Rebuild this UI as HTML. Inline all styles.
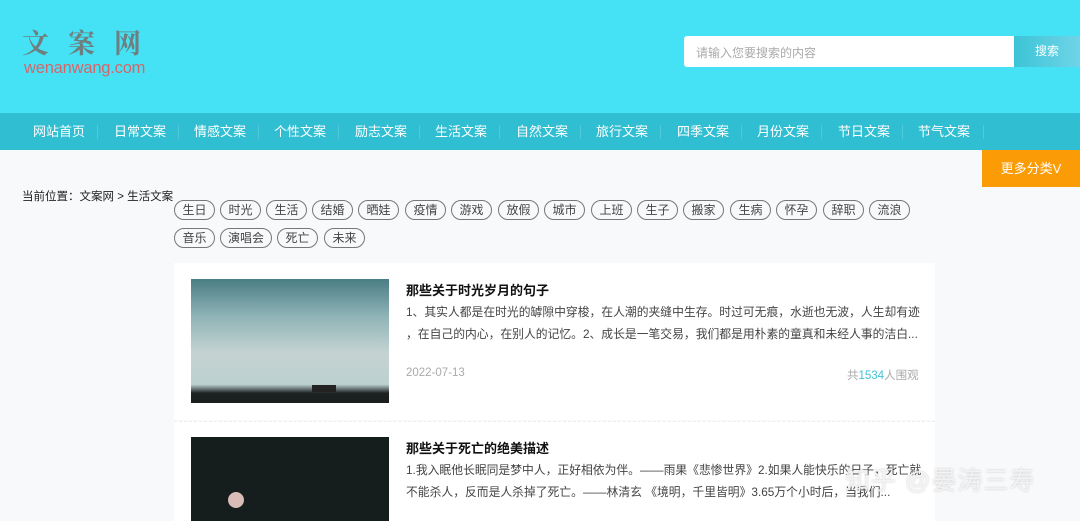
<!DOCTYPE html>
<html><head><meta charset="utf-8"><style>
*{margin:0;padding:0;box-sizing:border-box}
body{width:1080px;height:521px;overflow:hidden;background:#f8f9fb;font-family:"Liberation Sans","Noto Sans CJK SC",sans-serif;position:relative}
.hd{position:absolute;left:0;top:0;width:1080px;height:113px;background:#45e2f6}
.logo1{position:absolute;left:22px;top:26px;font-family:"Noto Serif CJK SC",serif;font-size:27px;letter-spacing:19px;color:#6e7f80;font-weight:bold;white-space:nowrap;line-height:32px}
.logo2{position:absolute;left:24px;top:59px;font-size:16.5px;color:#d5666a;letter-spacing:-0.2px}
.inp{position:absolute;left:684px;top:36px;width:331px;height:31px;background:#fff;border-radius:3px 0 0 3px;font-size:12px;color:#aaa;padding:8px 12px}
.btn{position:absolute;left:1014px;top:36px;width:66px;height:31px;background:linear-gradient(90deg,#3cc4d6,#6fd4e8);color:#fff;font-size:12px;text-align:center;line-height:31px}
.nav{position:absolute;left:0;top:113px;width:1080px;height:37px;background:#30bfd2}
.nav span{position:absolute;top:0;line-height:37px;color:#fff;font-size:13px}
.nav i{position:absolute;top:12px;width:1px;height:14px;background:#4fcadb}
.more{position:absolute;left:982px;top:150px;width:98px;height:37px;background:#fb9b06;color:#fff;font-size:13px;text-align:center;line-height:37px}
.bc{position:absolute;left:22px;top:188px;font-size:11.5px;color:#222}
.tag{position:absolute;height:20px;border:1px solid #777;border-radius:10px;font-size:12px;color:#444;line-height:18px;text-align:center}
.card{position:absolute;left:174px;width:761px;background:#fff}
.t{position:absolute;left:406px;font-size:13px;font-weight:bold;color:#111}
.d{position:absolute;left:406px;font-size:11.8px;color:#444;line-height:22px;white-space:nowrap}
.wm{position:absolute;left:845px;top:461px;font-size:25px;color:rgba(245,245,245,.9);text-shadow:0 0 2px rgba(0,0,0,.2);letter-spacing:1px;white-space:nowrap}
</style></head><body>
<div class="hd"><div class="logo1">文案网</div><div class="logo2">wenanwang.com</div>
<div class="inp">请输入您要搜索的内容</div><div class="btn">搜索</div></div>
<div class="nav">
<span style="left:33px">网站首页</span><i style="left:97px"></i>
<span style="left:114px">日常文案</span><i style="left:178px"></i>
<span style="left:194px">情感文案</span><i style="left:258px"></i>
<span style="left:274px">个性文案</span><i style="left:338px"></i>
<span style="left:355px">励志文案</span><i style="left:419px"></i>
<span style="left:435px">生活文案</span><i style="left:499px"></i>
<span style="left:516px">自然文案</span><i style="left:580px"></i>
<span style="left:596px">旅行文案</span><i style="left:660px"></i>
<span style="left:677px">四季文案</span><i style="left:741px"></i>
<span style="left:757px">月份文案</span><i style="left:821px"></i>
<span style="left:838px">节日文案</span><i style="left:902px"></i>
<span style="left:918px">节气文案</span><i style="left:983px"></i>
</div>
<div class="more">更多分类V</div>
<div class="bc">当前位置：文案网 &gt; 生活文案</div>
<div class="tag" style="left:174px;top:200px;width:41px">生日</div>
<div class="tag" style="left:220px;top:200px;width:41px">时光</div>
<div class="tag" style="left:266px;top:200px;width:41px">生活</div>
<div class="tag" style="left:312px;top:200px;width:41px">结婚</div>
<div class="tag" style="left:358px;top:200px;width:41px">晒娃</div>
<div class="tag" style="left:405px;top:200px;width:41px">疫情</div>
<div class="tag" style="left:451px;top:200px;width:41px">游戏</div>
<div class="tag" style="left:498px;top:200px;width:41px">放假</div>
<div class="tag" style="left:544px;top:200px;width:41px">城市</div>
<div class="tag" style="left:591px;top:200px;width:41px">上班</div>
<div class="tag" style="left:637px;top:200px;width:41px">生子</div>
<div class="tag" style="left:683px;top:200px;width:41px">搬家</div>
<div class="tag" style="left:730px;top:200px;width:41px">生病</div>
<div class="tag" style="left:776px;top:200px;width:41px">怀孕</div>
<div class="tag" style="left:823px;top:200px;width:41px">辞职</div>
<div class="tag" style="left:869px;top:200px;width:41px">流浪</div>
<div class="tag" style="left:174px;top:228px;width:41px">音乐</div>
<div class="tag" style="left:220px;top:228px;width:52px">演唱会</div>
<div class="tag" style="left:277px;top:228px;width:41px">死亡</div>
<div class="tag" style="left:324px;top:228px;width:41px">未来</div>
<div class="card" style="top:263px;height:157px"></div>
<div class="card" style="top:421px;height:100px;border-top:1px dashed #eee"></div>
<div style="position:absolute;left:191px;top:279px;width:198px;height:124px;background:linear-gradient(180deg,#4a7d84 0%,#8fb3b6 30%,#c5d3d2 60%,#bcd0cf 85%,#1c2222 92%,#1a1f1f 100%)"></div>
<div style="position:absolute;left:312px;top:385px;width:24px;height:7px;background:#222"></div>
<div style="position:absolute;left:191px;top:437px;width:198px;height:84px;background:#151d1d"></div>
<div style="position:absolute;left:228px;top:492px;width:16px;height:16px;border-radius:50%;background:#d9bcb6"></div>
<div class="t" style="top:280px">那些关于时光岁月的句子</div>
<div class="d" style="top:301px">1、其实人都是在时光的罅隙中穿梭，在人潮的夹缝中生存。时过可无痕，水逝也无波，人生却有迹<br>，在自己的内心，在别人的记忆。2、成长是一笔交易，我们都是用朴素的童真和未经人事的洁白...</div>
<div style="position:absolute;left:406px;top:367px;font-size:11.5px;color:#aaa">2022-07-13</div>
<div style="position:absolute;left:847px;top:367px;font-size:11.5px;color:#aaa">共<span style="color:#3fc2d6">1534</span>人围观</div>
<div class="t" style="top:438px">那些关于死亡的绝美描述</div>
<div class="d" style="top:459px">1.我入眠他长眠同是梦中人，正好相依为伴。——雨果《悲惨世界》2.如果人能快乐的日子，死亡就<br>不能杀人，反而是人杀掉了死亡。——林清玄 《境明，千里皆明》3.65万个小时后，当我们...</div>
<div class="wm">知乎 @晏涛三寿</div>
</body></html>
